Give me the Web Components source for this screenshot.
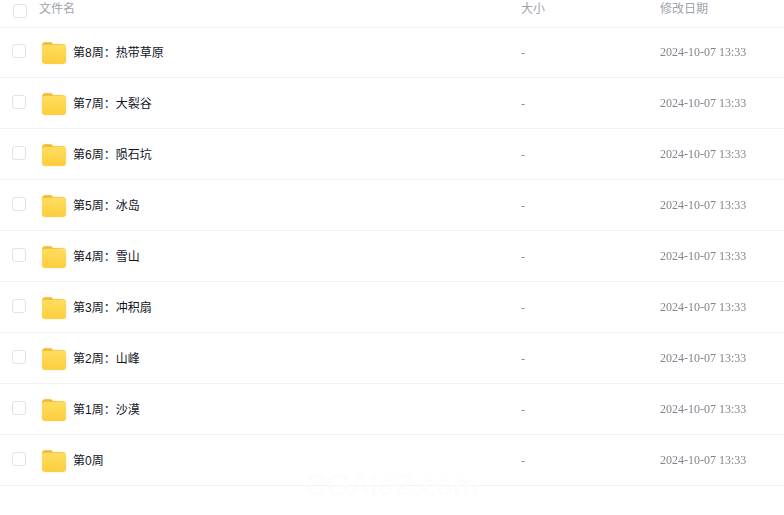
<!DOCTYPE html>
<html lang="zh">
<head>
<meta charset="utf-8">
<style>
html,body{margin:0;background:#fff;overflow:hidden;height:515px;}
</style>
</head>
<body>
<file-list></file-list>
<script>
const folderSvg = `<svg width="24" height="22" viewBox="0 0 24 22"><defs><linearGradient id="body" x1="0" y1="0" x2="0" y2="1"><stop offset="0" stop-color="#ffde5e"/><stop offset="1" stop-color="#fdcd3e"/></linearGradient></defs><path d="M.3 4V2.6C.3 1.1 1.4.2 2.8.2h5.2c1 0 1.6.3 2.3 1l1.3 1.3h8.4v2H.3z" fill="#f3b733"/><rect x=".3" y="2.3" width="23.4" height="19.4" rx="2.6" fill="#f7c340"/><rect x=".3" y="3" width="23.4" height="18.7" rx="2.6" fill="url(#body)"/></svg>`;

const rowTemplate = document.createElement("template");
rowTemplate.innerHTML = `<style>
:host{display:grid;grid-template-columns:39px 34px 448px 139px 1fr;height:50px;border-bottom:1px solid #f2f3f5;align-items:center;}
.check{width:12px;height:12px;margin-left:12px;margin-top:-2px;border:1px solid #e0e2e6;border-radius:3px;}
.icon{display:flex;margin-left:3px;margin-top:2px;filter:drop-shadow(0 0 1px rgba(255,205,80,.35));}
.name{font:12px "Liberation Sans","Noto Sans CJK SC",sans-serif;color:#0f1426;margin-top:-2px;}
.size{font:12px "Liberation Serif",serif;color:#8a8f99;margin-top:2px;}
.date{font:12px "Liberation Serif",serif;color:#81858f;margin-top:1px;will-change:opacity;}
</style>
<div class="check"></div>
<div class="icon">${folderSvg}</div>
<div class="name"><slot></slot></div>
<div class="size">-</div>
<div class="date"><slot name="date"></slot></div>`;
class FileRow extends HTMLElement {
  constructor() {
    super();
    this.attachShadow({ mode: "open" }).appendChild(rowTemplate.content.cloneNode(true));
  }
}
customElements.define("file-row", FileRow);

const listTemplate = document.createElement("template");
listTemplate.innerHTML = `<style>
:host{display:block;position:relative;height:515px;overflow:hidden;font-family:"Liberation Sans","Noto Sans CJK SC",sans-serif;}
header{display:grid;grid-template-columns:39px 482px 139px 1fr;height:27px;border-bottom:1px solid #f2f3f5;font-size:12px;color:#9ea3ad;}
header span{line-height:16px;padding-top:1px;}
.check{width:12px;height:12px;margin:4px 0 0 13px;border:1px solid #e0e2e6;border-radius:3px;}
::slotted(file-row:first-of-type){margin-top:-1px;}
.mark{position:absolute;left:305px;top:468px;font:30px "Liberation Sans",sans-serif;color:#fcfcfc;pointer-events:none;}
</style>
<header><div class="check"></div><span>文件名</span><span>大小</span><span>修改日期</span></header>
<slot></slot>
<div class="mark">CGAtoZ.com</div>`;
class FileList extends HTMLElement {
  constructor() {
    super();
    this.attachShadow({ mode: "open" }).appendChild(listTemplate.content.cloneNode(true));
  }
  connectedCallback() {
    const names = ["第8周\uFF1A热带草原","第7周\uFF1A大裂谷","第6周\uFF1A陨石坑","第5周\uFF1A冰岛","第4周\uFF1A雪山","第3周\uFF1A冲积扇","第2周\uFF1A山峰","第1周\uFF1A沙漠","第0周"];
    for (const n of names) {
      const row = document.createElement("file-row");
      row.textContent = n;
      const d = document.createElement("span");
      d.slot = "date";
      d.textContent = "2024-10-07 13:33";
      row.appendChild(d);
      this.appendChild(row);
    }
  }
}
customElements.define("file-list", FileList);
</script>
</body>
</html>
